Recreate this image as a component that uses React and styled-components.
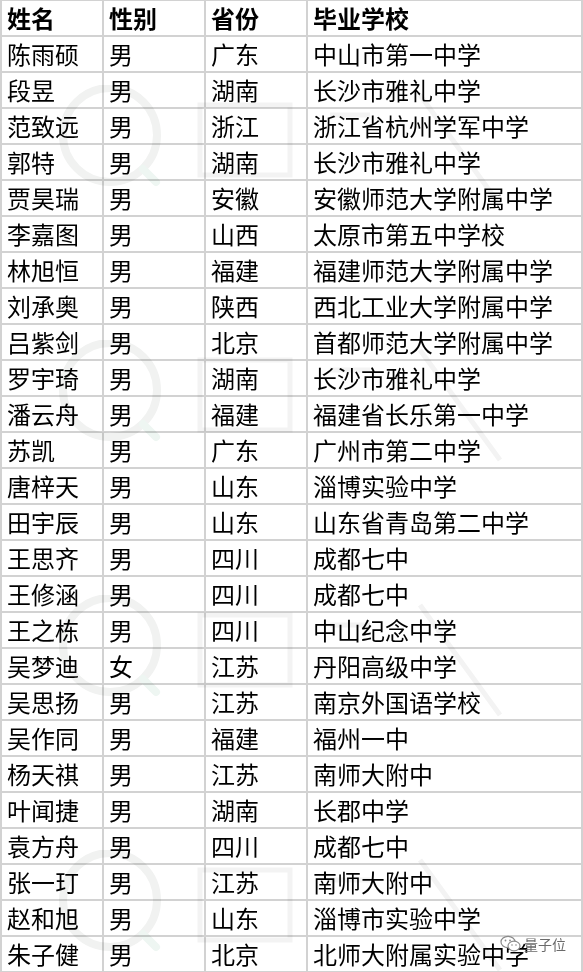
import React from 'react';
import styled, { createGlobalStyle } from 'styled-components';

const Global = createGlobalStyle`
  html, body { margin: 0; padding: 0; background: #ffffff; }
  body { width: 583px; height: 972px; overflow: hidden; }
`;

const Wrap = styled.div`
  position: relative;
  width: 583px;
  height: 972px;
`;

const Table = styled.div`
  display: grid;
  grid-template-columns: 100px 100px 100px 1fr;
  grid-auto-rows: 34px;
  gap: 2px;
  padding: 1px 2px;
  background: #d2d2d2;
  width: 583px;
  box-sizing: border-box;
`;

const Cell = styled.div`
  background: #ffffff;
  display: flex;
  align-items: center;
  padding-left: 5px;
  font-family: "Noto Sans CJK SC", "Noto Sans", sans-serif;
  font-size: 24px;
  line-height: 1;
  color: #000;
  font-weight: ${p => (p.$head ? 700 : 400)};
  white-space: nowrap;
`;

const Marks = styled.div`
  position: absolute;
  inset: 0;
  pointer-events: none;
  mix-blend-mode: multiply;
  display: flex;
  flex-direction: column;
  padding: 85px 0 0 0;
  gap: 125px;
  overflow: hidden;
`;

const Badge = styled.div`
  position: absolute;
  left: 500px;
  top: 934px;
  display: flex;
  align-items: center;
  gap: 2px;
  font-family: "Noto Sans CJK SC", sans-serif;
  font-size: 14px;
  color: #6a6a6a;
  pointer-events: none;
`;

const rows = [
  ['姓名', '性别', '省份', '毕业学校'],
  ['陈雨硕', '男', '广东', '中山市第一中学'],
  ['段昱', '男', '湖南', '长沙市雅礼中学'],
  ['范致远', '男', '浙江', '浙江省杭州学军中学'],
  ['郭特', '男', '湖南', '长沙市雅礼中学'],
  ['贾昊瑞', '男', '安徽', '安徽师范大学附属中学'],
  ['李嘉图', '男', '山西', '太原市第五中学校'],
  ['林旭恒', '男', '福建', '福建师范大学附属中学'],
  ['刘承奥', '男', '陕西', '西北工业大学附属中学'],
  ['吕紫剑', '男', '北京', '首都师范大学附属中学'],
  ['罗宇琦', '男', '湖南', '长沙市雅礼中学'],
  ['潘云舟', '男', '福建', '福建省长乐第一中学'],
  ['苏凯', '男', '广东', '广州市第二中学'],
  ['唐梓天', '男', '山东', '淄博实验中学'],
  ['田宇辰', '男', '山东', '山东省青岛第二中学'],
  ['王思齐', '男', '四川', '成都七中'],
  ['王修涵', '男', '四川', '成都七中'],
  ['王之栋', '男', '四川', '中山纪念中学'],
  ['吴梦迪', '女', '江苏', '丹阳高级中学'],
  ['吴思扬', '男', '江苏', '南京外国语学校'],
  ['吴作同', '男', '福建', '福州一中'],
  ['杨天祺', '男', '江苏', '南师大附中'],
  ['叶闻捷', '男', '湖南', '长郡中学'],
  ['袁方舟', '男', '四川', '成都七中'],
  ['张一玎', '男', '江苏', '南师大附中'],
  ['赵和旭', '男', '山东', '淄博市实验中学'],
  ['朱子健', '男', '北京', '北师大附属实验中学'],
];

// faint logo watermark: ring with a short tail, plus outlined square shapes
const Watermark = () => (
  <svg width="583" height="130" viewBox="0 0 583 130" style={{ flex: 'none' }}>
    <circle cx="110" cy="50" r="47" fill="none" stroke="#f1f2f1" strokeWidth="8" />
    <path d="M143 84 L156 97" stroke="#eef6f2" strokeWidth="8" strokeLinecap="round" />
    <rect x="200" y="20" width="90" height="70" fill="none" stroke="#f3f3f3" strokeWidth="5" />
    <path d="M330 30 L370 30 M420 10 L500 120" stroke="#f3f3f3" strokeWidth="5" fill="none" />
  </svg>
);

const WeChat = () => (
  <svg width="22" height="18" viewBox="0 0 22 18">
    <ellipse cx="8" cy="7" rx="7" ry="5.6" fill="none" stroke="#8a8a8a" strokeWidth="1.2" />
    <ellipse cx="14" cy="11" rx="6" ry="4.8" fill="#fff" stroke="#8a8a8a" strokeWidth="1.2" />
    <circle cx="5.5" cy="5.5" r="0.9" fill="#8a8a8a" />
    <circle cx="10" cy="5.5" r="0.9" fill="#8a8a8a" />
    <circle cx="12" cy="10" r="0.8" fill="#8a8a8a" />
    <circle cx="16" cy="10" r="0.8" fill="#8a8a8a" />
  </svg>
);

export default function App() {
  return (
    <Wrap>
      <Global />
      <Table>
        {rows.map((r, i) =>
          r.map((c, j) => (
            <Cell key={`${i}-${j}`} $head={i === 0}>{c}</Cell>
          ))
        )}
      </Table>
      <Marks>
        {[0, 1, 2, 3].map(k => <Watermark key={k} />)}
      </Marks>
      <Badge>
        <WeChat />
        <span>量子位</span>
      </Badge>
    </Wrap>
  );
}
